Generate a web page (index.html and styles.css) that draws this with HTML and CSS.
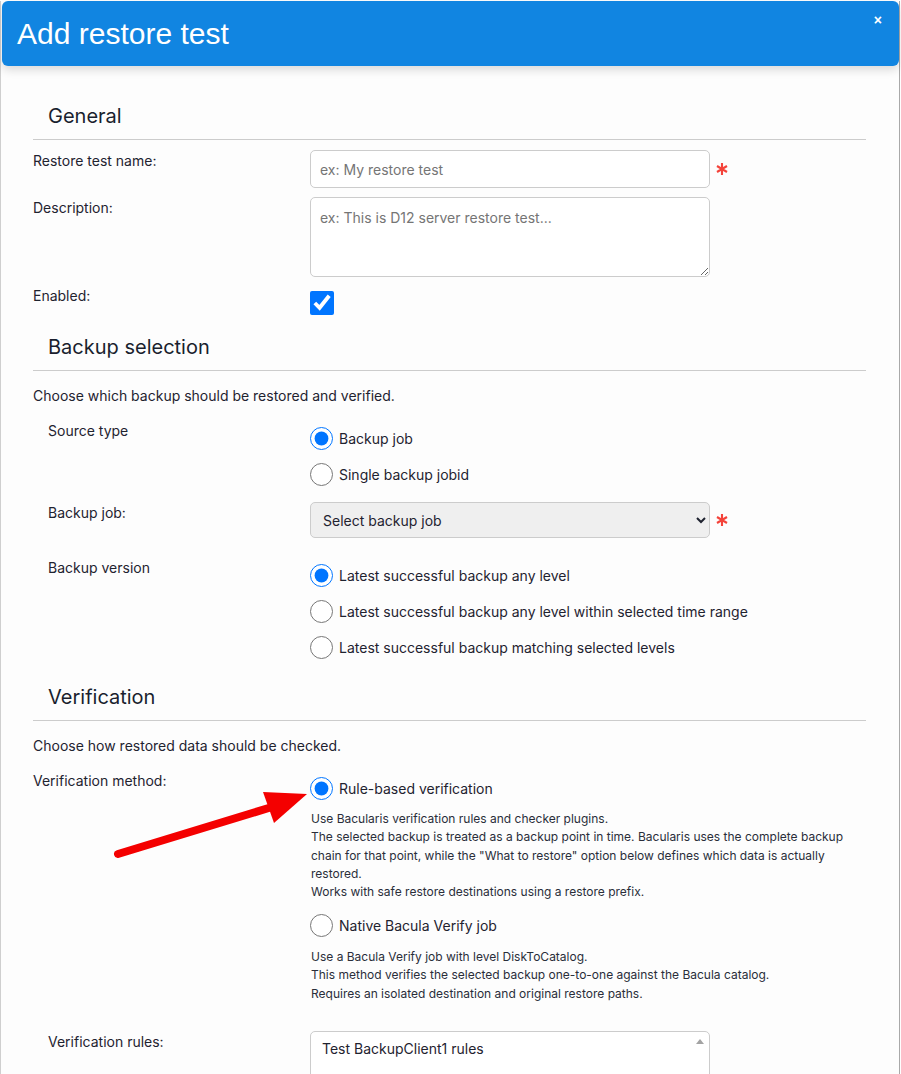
FILE: index.html
```html
<!DOCTYPE html>
<html lang="en">
<head>
<meta charset="utf-8">
<title>Add restore test</title>
<link rel="stylesheet" href="styles.css">
</head>
<body>
<div class="modal">
  <header class="modal-header">
    <h2 class="title">Add restore test</h2>
    <span class="close">×</span>
  </header>
  <div class="content">
    <h3 class="section">General</h3>
    <div class="row row-name">
      <label class="lbl">Restore test name:</label>
      <input class="field" type="text" placeholder="ex: My restore test">
      <svg class="req" viewBox="0 0 12 14"><path d="M6 1V13M1 4L11 10M1 10L11 4" stroke="#f4433a" stroke-width="2.1" fill="none"/></svg>
    </div>
    <div class="row row-desc">
      <label class="lbl">Description:</label>
      <textarea class="field area" placeholder="ex: This is D12 server restore test..."></textarea>
    </div>
    <div class="row row-enabled">
      <label class="lbl">Enabled:</label>
      <input class="check" type="checkbox" checked>
    </div>

    <h3 class="section next">Backup selection</h3>
    <p class="intro">Choose which backup should be restored and verified.</p>
    <div class="row row-source">
      <label class="lbl indent">Source type</label>
      <div class="options">
        <label class="opt"><input type="radio" name="src" checked>Backup job</label>
        <label class="opt"><input type="radio" name="src">Single backup jobid</label>
      </div>
    </div>
    <div class="row row-job">
      <label class="lbl indent">Backup job:</label>
      <select class="select"><option>Select backup job</option></select>
      <svg class="req" viewBox="0 0 12 14"><path d="M6 1V13M1 4L11 10M1 10L11 4" stroke="#f4433a" stroke-width="2.1" fill="none"/></svg>
    </div>
    <div class="row row-version">
      <label class="lbl indent">Backup version</label>
      <div class="options wide">
        <label class="opt"><input type="radio" name="ver" checked>Latest successful backup any level</label>
        <label class="opt"><input type="radio" name="ver">Latest successful backup any level within selected time range</label>
        <label class="opt"><input type="radio" name="ver">Latest successful backup matching selected levels</label>
      </div>
    </div>

    <h3 class="section next">Verification</h3>
    <p class="intro">Choose how restored data should be checked.</p>
    <div class="row row-method">
      <label class="lbl">Verification method:</label>
      <div class="options wide">
        <label class="opt"><input type="radio" name="meth" checked>Rule-based verification</label>
        <p class="desc">Use Bacularis verification rules and checker plugins.<br>The selected backup is treated as a backup point in time. Bacularis uses the complete backup<br>chain for that point, while the "What to restore" option below defines which data is actually<br>restored.<br>Works with safe restore destinations using a restore prefix.</p>
        <label class="opt opt-gap"><input type="radio" name="meth">Native Bacula Verify job</label>
        <p class="desc">Use a Bacula Verify job with level DiskToCatalog.<br>This method verifies the selected backup one-to-one against the Bacula catalog.<br>Requires an isolated destination and original restore paths.</p>
      </div>
    </div>
    <div class="row row-rules">
      <label class="lbl indent">Verification rules:</label>
      <div class="list-wrap">
        <select class="listbox" multiple size="6">
          <option>Test BackupClient1 rules</option>
          <option>Test BackupClient2 rules</option>
          <option>Check config files</option>
          <option>Check database dumps</option>
        </select>
        <span class="scroll-up"></span>
      </div>
    </div>
  </div>
  <svg class="arrow" viewBox="100 780 220 90">
    <line x1="118" y1="853" x2="272" y2="806" stroke="#f40000" stroke-width="8" stroke-linecap="round"/>
    <polygon points="263,791 307,793 274,822" fill="#f40000"/>
  </svg>
</div>
</body>
</html>
```

FILE: styles.css
```css
* { box-sizing: border-box; }

body {
  margin: 0;
  background: #fff;
  font-family: Inter, "Noto Sans", sans-serif;
  font-size: 14px;
  color: #1f2330;
}

.modal {
  position: relative;
  width: 900px;
  min-height: 1200px;
  border-left: 1px solid #cfcfcf;
  border-right: 1px solid #a9a9a9;
  background: #fdfdfd;
}

.modal-header {
  margin: 1px 0 0 1px;
  height: 65px;
  padding: 0 17px 0 15px;
  background: #1185e1;
  color: #fff;
  border-radius: 6px;
  display: flex;
  justify-content: space-between;
  align-items: center;
  box-shadow: 0 4px 10px rgba(0, 0, 0, 0.14);
}

.title {
  margin: 0;
  font: 400 30px/1 "Liberation Sans", Arial, sans-serif;
}

.close {
  align-self: flex-start;
  margin-top: 9px;
  font: 700 14px/20px "Liberation Sans", Arial, sans-serif;
}

.content {
  padding: 0 33px 0 32px;
}

.section {
  margin: 35px 0 0;
  padding: 0 0 8px 15px;
  font-size: 20px;
  line-height: 30px;
  font-weight: 400;
  color: #1a1f2e;
  border-bottom: 1px solid #cccccc;
}

.section.next { margin-top: 17px; }

.intro {
  margin: 14px 0 0;
  line-height: 21px;
}

.row {
  display: grid;
  grid-template-columns: 277px 400px 1fr;
  align-items: start;
}

.lbl { line-height: 21px; }
.lbl.indent { padding-left: 15px; }

.row-name { margin-top: 10px; }
.row-desc { margin-top: 9px; }
.row-enabled { margin-top: 8px; }
.row-source { margin-top: 14px; }
.row-job { margin-top: 10px; }
.row-version { margin-top: 19px; }
.row-method { margin-top: 14px; }
.row-rules { margin-top: 28px; }

.field {
  width: 400px;
  height: 38px;
  padding: 0 9px;
  border: 1px solid #cccccc;
  border-radius: 5px;
  background: #fff;
  font: 14px Inter, "Noto Sans", sans-serif;
  color: #1f2330;
}

.field::placeholder { color: #757575; }

.area {
  height: 80px;
  padding: 9px 9px;
  line-height: 21px;
}

.req {
  display: block;
  width: 12px;
  height: 14px;
  margin-left: 6px;
  align-self: center;
}

.check {
  width: 24px;
  height: 24px;
  margin: 6px 0 0;
}

.options {
  display: flex;
  flex-direction: column;
}

.wide { grid-column: 2 / 4; }

.opt {
  height: 36px;
  display: flex;
  align-items: center;
  line-height: 21px;
}

.opt input {
  width: 23px;
  height: 23px;
  margin: 0 6px 0 0;
}

.opt-gap { margin-top: 6.5px; }

.desc {
  margin: 4px 0 0 1px;
  font-size: 12px;
  line-height: 18.3px;
  color: #2a2e3a;
}

.select {
  width: 400px;
  height: 36px;
  padding: 0 8px;
  border: 1px solid #cccccc;
  border-radius: 5px;
  background: #efefef;
  font: 14px Inter, "Noto Sans", sans-serif;
  color: #1f2330;
}

.list-wrap {
  position: relative;
  width: 400px;
}

.listbox {
  display: block;
  width: 400px;
  height: 110px;
  padding: 1px 9px;
  border: 1px solid #cccccc;
  border-radius: 5px;
  background: #fff;
  font: 14px Inter, "Noto Sans", sans-serif;
  color: #1f2330;
  overflow: hidden;
}

.listbox option { padding: 7px 2px; }

.scroll-up {
  position: absolute;
  top: 8px;
  right: 6px;
  width: 0;
  height: 0;
  border-left: 4px solid transparent;
  border-right: 4px solid transparent;
  border-bottom: 5px solid #a3a3a3;
}

.arrow {
  position: absolute;
  left: 99px;
  top: 780px;
  width: 220px;
  height: 90px;
  pointer-events: none;
}
```
